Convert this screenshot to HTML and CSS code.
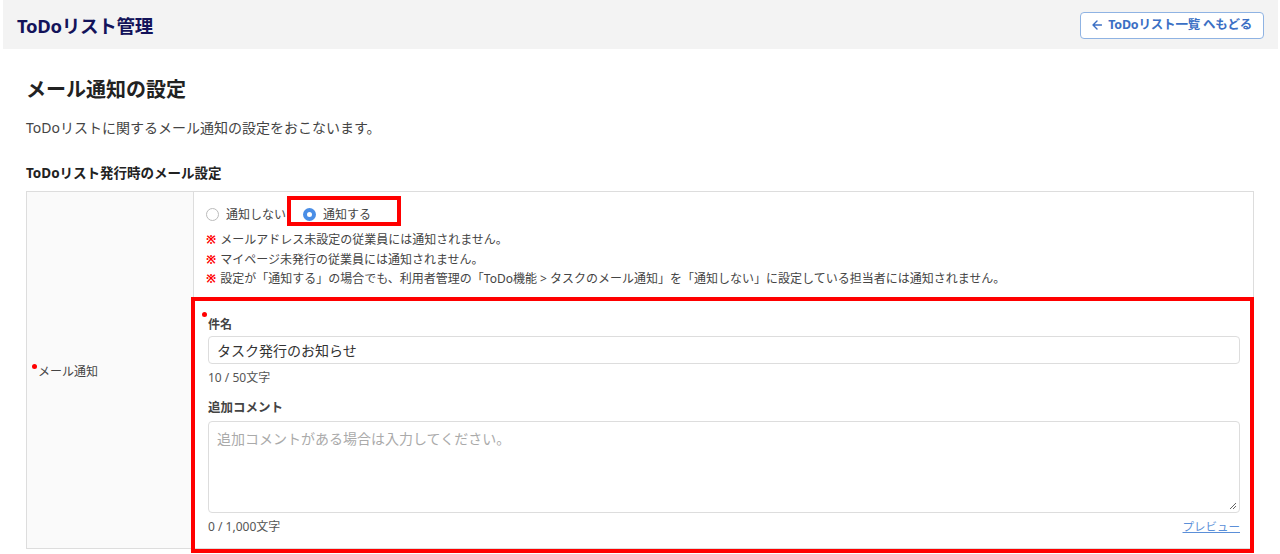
FILE: index.html
```html
<!DOCTYPE html>
<html lang="ja">
<head>
<meta charset="utf-8">
<title>ToDoリスト管理</title>
<link rel="stylesheet" href="styles.css">
</head>
<body>
<header class="topbar">
  <h1 class="app-title">ToDoリスト管理</h1>
  <a class="back-btn" href="#">
    <svg class="back-arrow" width="10" height="12" viewBox="0 0 10 12" aria-hidden="true"><path d="M5 2 L1 6 L5 10 M1 6 H9.5" fill="none" stroke="#3b6fc4" stroke-width="1.4" stroke-linecap="round" stroke-linejoin="round"/></svg>
    <span>ToDoリスト一覧 へもどる</span>
  </a>
</header>
<main class="content">
  <h2 class="page-title">メール通知の設定</h2>
  <p class="page-desc">ToDoリストに関するメール通知の設定をおこないます。</p>
  <h3 class="section-title">ToDoリスト発行時のメール設定</h3>
  <div class="form-table">
    <div class="label-cell"><span class="req-dot"></span><span class="label-text">メール通知</span></div>
    <div class="value-cell">
      <div class="top-part">
        <div class="radio-row">
          <label class="radio-opt"><span class="radio"></span><span>通知しない</span></label>
          <label class="radio-opt selected highlight"><span class="radio checked"></span><span>通知する</span></label>
        </div>
        <ul class="notes">
          <li><span class="mark">※</span>メールアドレス未設定の従業員には通知されません。</li>
          <li><span class="mark">※</span>マイページ未発行の従業員には通知されません。</li>
          <li><span class="mark">※</span>設定が「通知する」の場合でも、利用者管理の「ToDo機能 &gt; タスクのメール通知」を「通知しない」に設定している担当者には通知されません。</li>
        </ul>
      </div>
      <div class="sub-part highlight-box">
        <div class="field-label"><span class="req-dot small"></span>件名</div>
        <div class="text-input">タスク発行のお知らせ</div>
        <div class="counter">10 / 50文字</div>
        <div class="field-label plain">追加コメント</div>
        <div class="textarea">
          <span class="placeholder">追加コメントがある場合は入力してください。</span>
          <svg class="grip" width="8" height="8" viewBox="0 0 8 8" aria-hidden="true"><path d="M7 1 L1 7 M7 4 L4 7" stroke="#666" stroke-width="1"/></svg>
        </div>
        <div class="footer-row">
          <span class="counter-inline">0 / 1,000文字</span>
          <a class="preview" href="#">プレビュー</a>
        </div>
      </div>
    </div>
  </div>
</main>
</body>
</html>
```

FILE: styles.css
```css
* { box-sizing: border-box; }
html, body { margin: 0; padding: 0; }
body {
  font-family: "Noto Sans", "Noto Sans CJK JP", sans-serif;
  color: #333;
  background: #fff;
  width: 1280px;
  height: 554px;
  overflow: hidden;
}
.topbar {
  margin: 0 2px 0 3px;
  height: 49px;
  background: #f3f3f3;
  display: flex;
  align-items: center;
  justify-content: space-between;
  padding: 0 14px 0 14px;
}
.app-title {
  margin: 0;
  font-size: 18.5px;
  font-weight: 700;
  color: #13135a;
  letter-spacing: -0.3px;
}
.back-btn {
  display: flex;
  align-items: center;
  gap: 6px;
  height: 27px;
  margin-top: 1px;
  padding: 0 11px 0 11px;
  border: 1px solid #8fb3e3;
  border-radius: 4px;
  background: #fff;
  color: #3b6fc4;
  font-size: 12.5px;
  font-weight: 700;
  text-decoration: none;
  line-height: 1;
  letter-spacing: -0.2px;
}
.content { padding: 27px 26px 0 26px; }
.page-title {
  margin: 0;
  font-size: 20px;
  line-height: 28px;
  font-weight: 700;
  color: #222;
}
.page-desc {
  margin: 14px 0 0;
  font-size: 14px;
  line-height: 20px;
  color: #444;
}
.section-title {
  margin: 25px 0 0;
  font-size: 13.5px;
  line-height: 20px;
  font-weight: 700;
  color: #222;
}
.form-table {
  margin-top: 8px;
  width: 1228px;
  height: 358px;
  border: 1px solid #ddd;
  display: flex;
}
.label-cell {
  width: 167px;
  flex: none;
  background: #fafafa;
  border-right: 1px solid #ddd;
  display: flex;
  align-items: center;
  padding-left: 5px;
  padding-top: 2px;
  font-size: 12px;
  color: #444;
}
.req-dot {
  display: inline-block;
  width: 5px;
  height: 5px;
  border-radius: 50%;
  background: #f00;
  align-self: center;
  margin-top: -9px;
  margin-right: 1px;
}
.value-cell { flex: 1; display: flex; flex-direction: column; }
.top-part { padding: 12px 13px 11px 12px; }
.radio-row { display: flex; align-items: center; height: 20px; gap: 17px; }
.radio-opt { display: flex; align-items: center; gap: 7px; font-size: 12px; color: #444; position: relative; }
.radio {
  width: 13px; height: 13px; border-radius: 50%;
  border: 1px solid #bbb; background: #fff; display: inline-block;
}
.radio.checked { border: 4px solid #4a8ee6; }
.highlight::after {
  content: "";
  position: absolute;
  left: -16px; right: -30px; top: -9px; bottom: -3px;
  border: 4px solid #f00;
  pointer-events: none;
}
.notes {
  list-style: none;
  margin: 6px 0 0;
  padding: 0;
  font-size: 12px;
  line-height: 19.5px;
  color: #444;
}
.mark { color: #f00; font-weight: 700; margin-right: 4px; }
.sub-part {
  flex: 1;
  border-top: 1px solid #ddd;
  padding: 16px 13px 0 14px;
  position: relative;
}
.highlight-box::after {
  content: "";
  position: absolute;
  left: -3px; right: -1px; top: -4px; bottom: -5px;
  border: 4px solid #f00;
  pointer-events: none;
}
.field-label {
  font-size: 12px;
  line-height: 16px;
  font-weight: 700;
  color: #444;
  position: relative;
}
.field-label.plain { margin-top: 14px; font-size: 12.5px; }
.req-dot.small { position: absolute; left: -6px; top: -5px; margin: 0; }
.text-input {
  margin-top: 3px;
  height: 28px;
  border: 1px solid #ddd;
  border-radius: 4px;
  padding: 0 8px;
  display: flex;
  align-items: center;
  font-size: 14px;
  color: #333;
}
.counter, .counter-inline { font-size: 12px; line-height: 16px; color: #555; }
.counter { margin-top: 6px; }
.textarea {
  margin-top: 5px;
  height: 92px;
  border: 1px solid #ddd;
  border-radius: 4px;
  padding: 7px 8px;
  font-size: 14px;
  line-height: 20px;
  position: relative;
}
.placeholder { color: #aaa; }
.grip { position: absolute; right: 2px; bottom: 2px; }
.footer-row {
  margin-top: 6px;
  display: flex;
  justify-content: space-between;
  align-items: center;
  height: 16px;
}
.preview {
  font-size: 11.5px;
  color: #5b8fd8;
  text-decoration: underline;
  line-height: 16px;
}
```
